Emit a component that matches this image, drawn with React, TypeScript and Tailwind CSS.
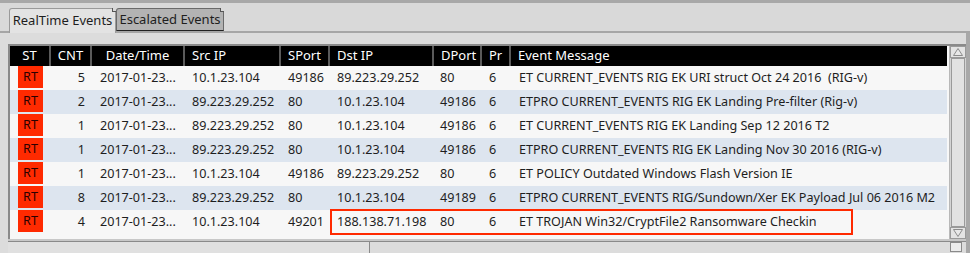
import React from 'react';

interface EventRow {
  cnt: number;
  date: string;
  src: string;
  sport: string;
  dst: string;
  dport: string;
  pr: string;
  msg: string;
  flagged?: boolean;
}

const rows: EventRow[] = [
  { cnt: 5, date: '2017-01-23...', src: '10.1.23.104', sport: '49186', dst: '89.223.29.252', dport: '80', pr: '6', msg: 'ET CURRENT_EVENTS RIG EK URI struct Oct 24 2016  (RIG-v)' },
  { cnt: 2, date: '2017-01-23...', src: '89.223.29.252', sport: '80', dst: '10.1.23.104', dport: '49186', pr: '6', msg: 'ETPRO CURRENT_EVENTS RIG EK Landing Pre-filter (Rig-v)' },
  { cnt: 1, date: '2017-01-23...', src: '89.223.29.252', sport: '80', dst: '10.1.23.104', dport: '49186', pr: '6', msg: 'ET CURRENT_EVENTS RIG EK Landing Sep 12 2016 T2' },
  { cnt: 1, date: '2017-01-23...', src: '89.223.29.252', sport: '80', dst: '10.1.23.104', dport: '49186', pr: '6', msg: 'ETPRO CURRENT_EVENTS RIG EK Landing Nov 30 2016 (RIG-v)' },
  { cnt: 1, date: '2017-01-23...', src: '10.1.23.104', sport: '49186', dst: '89.223.29.252', dport: '80', pr: '6', msg: 'ET POLICY Outdated Windows Flash Version IE' },
  { cnt: 8, date: '2017-01-23...', src: '89.223.29.252', sport: '80', dst: '10.1.23.104', dport: '49189', pr: '6', msg: 'ETPRO CURRENT_EVENTS RIG/Sundown/Xer EK Payload Jul 06 2016 M2' },
  { cnt: 4, date: '2017-01-23...', src: '10.1.23.104', sport: '49201', dst: '188.138.71.198', dport: '80', pr: '6', msg: 'ET TROJAN Win32/CryptFile2 Ransomware Checkin', flagged: true },
];

const cols = 'grid grid-cols-[41px_41px_93px_96px_49px_104px_48px_29px_1fr]';

const HeaderCell: React.FC<{ label: string; center?: boolean; last?: boolean }> = ({ label, center, last }) => (
  <div className={`flex items-center h-full ${center ? 'justify-center' : 'pl-[7px]'} ${last ? '' : 'border-r-2 border-[#5a5a5a]'}`}>
    {label}
  </div>
);

const Triangle: React.FC<{ down?: boolean }> = ({ down }) => (
  <svg width="10" height="8" viewBox="0 0 10 8">
    <polygon
      points={down ? '0.5,0.5 9.5,0.5 5,7.5' : '5,0.5 9.5,7.5 0.5,7.5'}
      fill="#e8e8e8"
      stroke="#8c8c8c"
      strokeWidth="1"
    />
  </svg>
);

export default function App() {
  return (
    <div
      className="w-[970px] h-[253px] bg-[#d9d9d9] overflow-hidden flex flex-col text-[12.6px] text-[#1e1e1e]"
      style={{ fontFamily: '"Noto Sans", "Open Sans", sans-serif' }}
    >
      {/* top band */}
      <div className="h-[3px] bg-[#a8a8a8] shrink-0" />

      {/* tab bar */}
      <div className="h-[30px] shrink-0 flex items-end pl-[9px] border-b-2 border-[#a6a6a6] relative text-[13px]">
        <div className="relative h-[25px] -mb-[2px] w-[107px] bg-[#e3e3e3] border border-b-0 border-[#9a9a9a] rounded-tl-[3px] flex items-center justify-center z-10">
          <span className="leading-none -mt-[1px]">RealTime Events</span>
          <div className="absolute -top-px -right-px w-[4px] h-[4px] bg-[#d9d9d9] border-l border-b border-[#555]" />
        </div>
        <div className="relative h-[23px] w-[108px] bg-[#b3b3b3] border border-[#6a6a6a] border-b-[#222] rounded-tl-[3px] flex items-center justify-center">
          <span className="leading-none -mt-[1px]">Escalated Events</span>
          <div className="absolute -top-px -right-px w-[4px] h-[4px] bg-[#d9d9d9] border-l border-b border-[#555]" />
        </div>
      </div>

      {/* content */}
      <div className="flex-1 flex flex-col bg-[#dcdcdc] border-r-4 border-[#a8a8a8] pt-[11px] pl-[8px]">
        <div className="flex h-[195px] border-t-2 border-l-2 border-[#8a8a8a] bg-[#f7f7f7]">
          {/* table */}
          <div className="w-[939px] flex flex-col">
            <div className={`${cols} h-[20px] bg-black text-white shrink-0 text-[13px]`}>
              <HeaderCell label="ST" center />
              <HeaderCell label="CNT" center />
              <HeaderCell label="Date/Time" center />
              <HeaderCell label="Src IP" />
              <HeaderCell label="SPort" />
              <HeaderCell label="Dst IP" />
              <HeaderCell label="DPort" />
              <HeaderCell label="Pr" />
              <HeaderCell label="Event Message" last />
            </div>
            {rows.map((r, i) => (
              <div
                key={i}
                className={`${cols} h-[24px] relative ${i % 2 === 1 ? 'bg-[#dde5ef]' : 'bg-[#f7f7f7]'}`}
              >
                <div className="flex items-start pl-[8px]">
                  <div className="w-[25px] h-[22px] bg-[#ff2a00] flex items-center justify-center text-[#2a0000]">RT</div>
                </div>
                <div className="flex items-center justify-end pr-[7px]">{r.cnt}</div>
                <div className="flex items-center pl-[8px] whitespace-nowrap">{r.date}</div>
                <div className="flex items-center pl-[7px]">{r.src}</div>
                <div className="flex items-center pl-[7px]">{r.sport}</div>
                <div className="flex items-center pl-[7px]">{r.dst}</div>
                <div className="flex items-center pl-[6px]">{r.dport}</div>
                <div className="flex items-center pl-[7px]">{r.pr}</div>
                <div className="flex items-center pl-[8px] whitespace-pre">{r.msg}</div>
                {r.flagged && (
                  <div className="absolute left-[320px] w-[523px] top-[-1px] h-[26px] border-2 border-[#ff2a00]" />
                )}
              </div>
            ))}
          </div>

          {/* vertical scrollbar */}
          <div className="w-[17px] ml-[2px] flex flex-col bg-[#d4d4d4] border-l border-[#b8b8b8]">
            <div className="h-[12px] flex items-center justify-center border border-[#9a9a9a] bg-[#e4e4e4]">
              <Triangle />
            </div>
            <div className="flex-1 mx-[1px] border border-[#9a9a9a] bg-[#e2e2e2]" />
            <div className="h-[12px] flex items-center justify-center border border-[#9a9a9a] bg-[#e4e4e4]">
              <Triangle down />
            </div>
          </div>
        </div>

        {/* bottom strip */}
        <div className="h-[2px] bg-[#c8c8c8]" />
        <div className="flex h-[12px] border-t border-[#8a8a8a]">
          <div className="w-[362px] border-r border-[#8a8a8a] bg-[#e0e0e0]" />
          <div className="flex-1" />
          <div className="w-[12px] h-[10px] mr-[4px] border border-[#8a8a8a] bg-[#ececec]" />
        </div>
      </div>
    </div>
  );
}
